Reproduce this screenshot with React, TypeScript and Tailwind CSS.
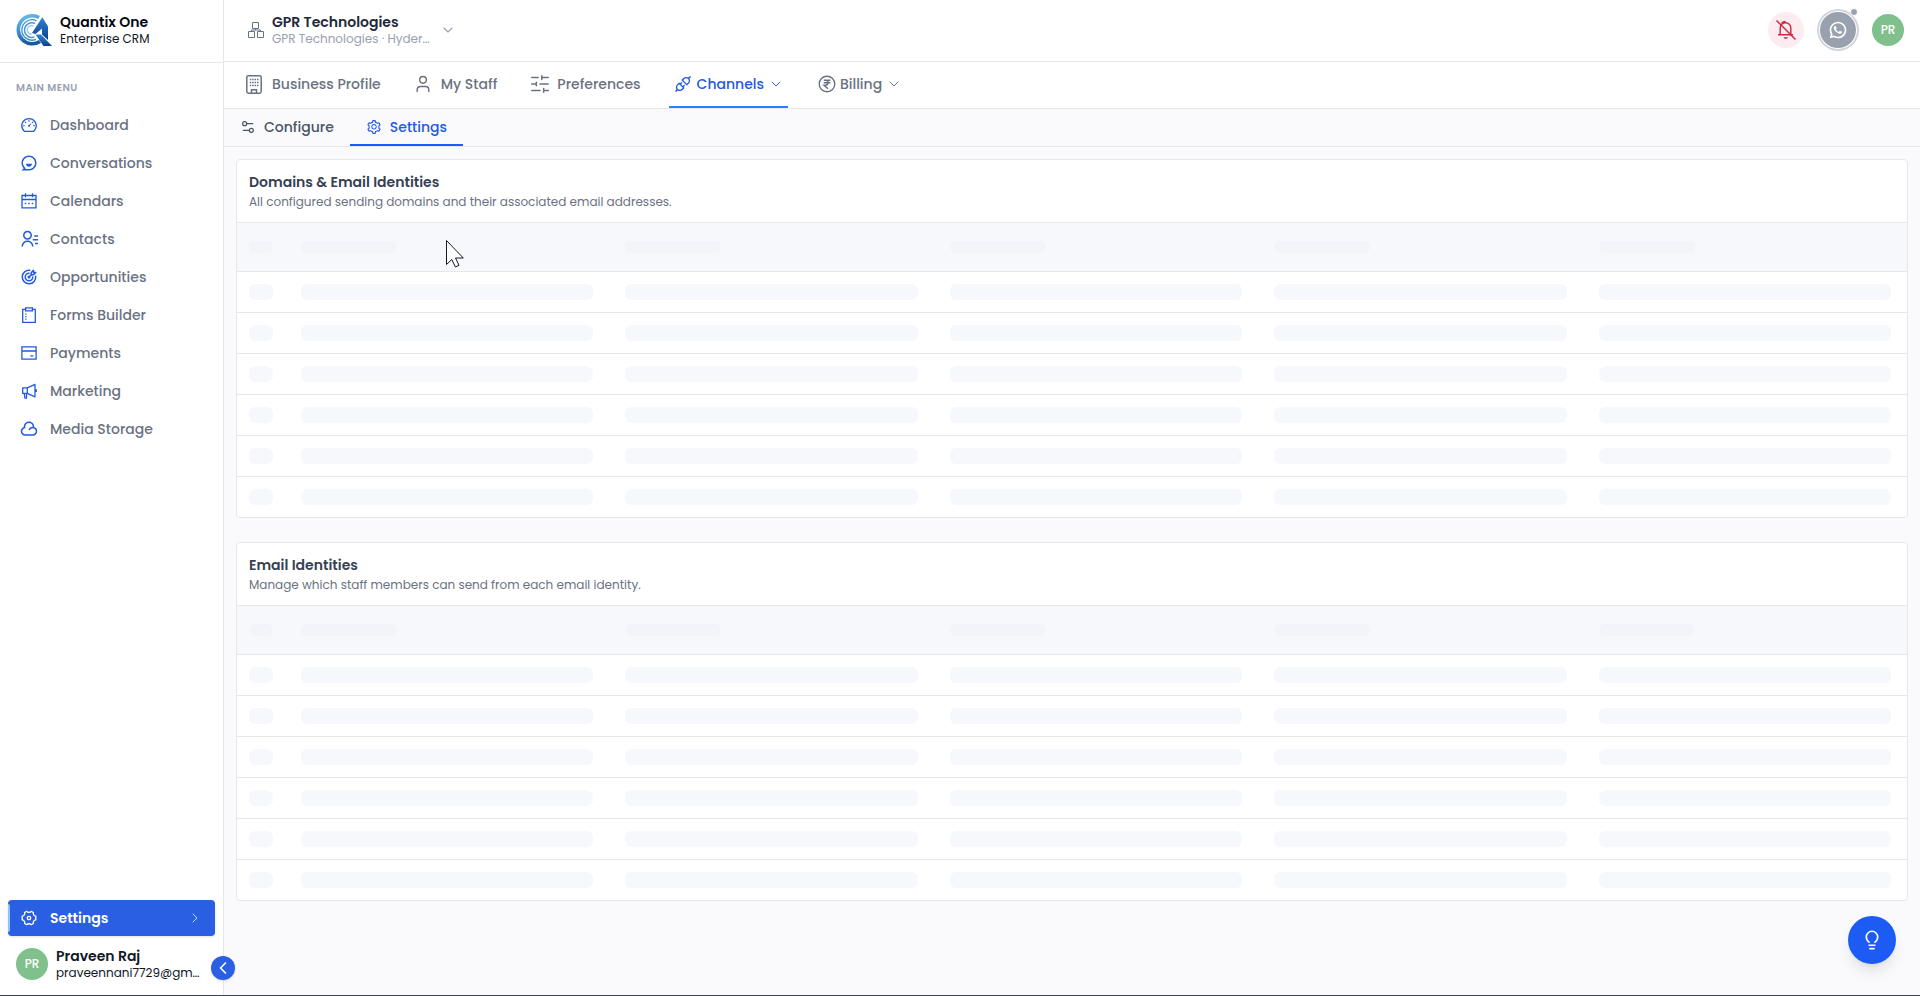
import React from "react";
import clsx from "clsx";
import { ChevronDown, ChevronLeft, ChevronRight, Settings2, SlidersHorizontal, User } from "lucide-react";
import { AiOutlineApi, AiOutlineDashboard, AiOutlineSetting } from "react-icons/ai";
import { RiChatSmile3Line, RiCloudLine, RiContactsLine, RiWhatsappLine } from "react-icons/ri";
import { TbTargetArrow } from "react-icons/tb";

type IconProps = { className?: string };

const CalendarIcon = ({ className }: IconProps) => (
  <svg viewBox="-1 -1 18 18" className={className} fill="none" stroke="currentColor" strokeWidth="1.3">
    <path d="M1 2.500h14v12.300H1zM1 6.500h14M4.500.3v4M11.500.3v4" />
    <path d="M3.800 10.500h1.500M7.250 10.500h1.500M10.700 10.500h1.500" />
  </svg>
);

const ClipboardIcon = ({ className }: IconProps) => (
  <svg viewBox="-1 -1 18 18" className={className} fill="none" stroke="currentColor" strokeWidth="1.3">
    <path d="M4.600 2.400H1.700v12.900h12.600V2.400h-2.900" />
    <path d="M4.600.9h6.800v3H4.600z" />
    <path d="M4.900 6.400v6.400" strokeDasharray="1.300 1.200" />
  </svg>
);

const PaymentIcon = ({ className }: IconProps) => (
  <svg viewBox="-1 -1 18 18" className={className} fill="none" stroke="currentColor" strokeWidth="1.3">
    <path d="M.9 1.800h14.200v12.400H.9zM.9 6h14.200M9.300 10.800h3" />
  </svg>
);

const MegaphoneIcon = ({ className }: IconProps) => (
  <svg viewBox="-1 -1 18 18" className={className} fill="none" stroke="currentColor" strokeWidth="1.3" strokeLinejoin="round">
    <path d="M1.700 4.800h4.600v5.600H1.700zM6.300 4.800 14 1.400v12.400l-7.700-3.400M15.200 6.200v2.800" />
    <path d="M3.200 10.400 4 15.200h1.500v-4.800" />
  </svg>
);

const GearIcon = ({ className }: IconProps) => (
  <svg viewBox="-1 -1 18 18" className={className} fill="none" stroke="currentColor" strokeWidth="1.3" strokeLinejoin="round">
    <path d="M5.700 1.300c1 1.300 3.600 1.300 4.600 0l2.100 1.200c-.6 1.600.6 3.400 2.400 3.700v3.600c-1.800.3-3 2.100-2.400 3.700l-2.100 1.200c-1-1.300-3.600-1.300-4.600 0l-2.100-1.200c.6-1.600-.6-3.400-2.400-3.700V6.200c1.800-.3 3-2.100 2.400-3.700z" />
    <circle cx="8" cy="8" r="1.700" />
  </svg>
);

const OrgIcon = ({ className }: IconProps) => (
  <svg viewBox="0 0 16 16" className={className} fill="none" stroke="currentColor" strokeWidth="1">
    <path d="M4.500.5h6v6h-6zM.5 9.500h6v6h-6zM9.500 9.500h6v6h-6zM7.500 6.500V8M3.500 9.500V8h9v1.500" />
  </svg>
);

const BuildingIcon = ({ className }: IconProps) => (
  <svg viewBox="0 0 16 19" className={className} fill="none" stroke="currentColor" strokeWidth="1.500">
    <rect x=".8" y=".8" width="14.400" height="17.400" rx="1.600" />
    <path d="M5.500 18v-3.200h5V18" />
    <path d="M3.800 4.500h8.700M3.800 7.500h8.700M3.800 10.500h8.700" strokeDasharray="1.500 .9" />
  </svg>
);

const RupeeIcon = ({ className }: IconProps) => (
  <svg viewBox="0 0 18 18" className={className} fill="none" stroke="currentColor" strokeWidth="1.400">
    <circle cx="9" cy="9" r="7.800" />
    <path d="M5.800 5.300h6.600M5.800 7.700h6.600M6 5.300h1.600c3.200 0 3.200 4.800 0 4.800H6l4 3.600" />
  </svg>
);

const BellOffIcon = ({ className }: IconProps) => (
  <svg viewBox="0 0 20 20" className={className} fill="none" stroke="currentColor" strokeWidth="1.400">
    <path d="M2 14.800h15M4.200 14.800V8a5.300 5.300 0 0 1 10.600 0v6.800M5.500 3.500C6.500 2.200 8 1.500 9.500 1.500" />
    <path d="M7.800 17.200h4a2 1.800 0 0 1-4 0z" fill="currentColor" stroke="none" />
    <path d="M.5.500l19 19" />
  </svg>
);

const BulbIcon = ({ className }: IconProps) => (
  <svg viewBox="0 0 14 20" className={className} fill="none" stroke="currentColor" strokeWidth="1.600">
    <path d="M4.600 12.600C2.500 11.200 1.300 9.200 1.300 7a5.700 5.700 0 0 1 11.400 0c0 2.200-1.200 4.200-3.300 5.600" />
    <path d="M3.500 15.300h7M4.300 18.600h5.400" />
  </svg>
);

const Logo = ({ className }: IconProps) => (
  <svg viewBox="0 0 36 32" className={className} fill="none">
    <defs>
      <linearGradient id="ring" x1="0" y1="0" x2=".3" y2="1">
        <stop offset="0" stopColor="#6cc3f2" />
        <stop offset="1" stopColor="#175aa8" />
      </linearGradient>
      <linearGradient id="tail" x1="0" y1="0" x2="0" y2="1">
        <stop offset="0" stopColor="#2f86d2" />
        <stop offset="1" stopColor="#0b3f8c" />
      </linearGradient>
    </defs>
    <path d="M23 3.500A14 14 0 1 0 24 27.500" stroke="url(#ring)" strokeWidth="3.600" />
    <path d="M20.500 6.800A10.200 10.200 0 1 0 20 25.400" stroke="#3b8fd0" strokeWidth="1.300" />
    <path d="M19 9.500A7.300 7.300 0 1 0 18.500 22.900" stroke="#4b98d6" strokeWidth="1.500" />
    <path d="M17.500 12.200A4.200 4.200 0 1 0 16 20" stroke="#8cc4ea" strokeWidth="1.200" />
    <path d="M26.300 3.300 32 12.500v13.500l-6-5.500v-6l-6.500 5.500-3.500-1z" fill="url(#tail)" />
    <path d="M19.500 20.500H25L36 32h-8.500z" fill="url(#tail)" />
  </svg>
);

const menuItems = [
  { label: "Dashboard", icon: AiOutlineDashboard },
  { label: "Conversations", icon: RiChatSmile3Line },
  { label: "Calendars", icon: CalendarIcon },
  { label: "Contacts", icon: RiContactsLine },
  { label: "Opportunities", icon: TbTargetArrow },
  { label: "Forms Builder", icon: ClipboardIcon },
  { label: "Payments", icon: PaymentIcon },
  { label: "Marketing", icon: MegaphoneIcon },
  { label: "Media Storage", icon: RiCloudLine },
];

const Sidebar = () => (
  <aside className="relative flex w-56 shrink-0 flex-col border-r border-gray-200 bg-white">
    <div className="flex h-[63px] items-center gap-2 border-b border-gray-200 px-4 pb-0.5">
      <Logo className="h-8 w-9" />
      <div>
        <p className="text-sm leading-[18px] font-semibold text-gray-950">Quantix One</p>
        <p className="text-xs leading-4 text-gray-900">Enterprise CRM</p>
      </div>
    </div>

    <nav className="px-2 pt-[17px]">
      <h2 className="px-2 text-[10px] leading-4 font-semibold tracking-wider text-gray-400">MAIN MENU</h2>
      <ul className="mt-[11px] space-y-0.5">
        {menuItems.map(({ label, icon: Icon }) => (
          <li key={label}>
            <a href="#" className="flex h-9 items-center gap-3 px-3 text-sm font-medium text-gray-500">
              <Icon className="size-[18px] text-[#2159e0]" />
              {label}
            </a>
          </li>
        ))}
      </ul>
    </nav>

    <div className="mt-auto px-2 pb-3.5">
      <a
        href="#"
        className="relative flex h-9 items-center gap-3 rounded bg-[#2a5fe3] px-3 text-sm font-semibold text-white shadow-sm"
      >
        <span className="absolute inset-y-1 left-0 w-0.5 rounded-r bg-blue-300" />
        <GearIcon className="size-[18px]" />
        Settings
        <ChevronRight className="ml-auto size-4 text-blue-200" strokeWidth={1.5} />
      </a>
      <div className="mt-[11px] flex items-center gap-2 px-2">
        <span className="flex size-8 shrink-0 items-center justify-center rounded-full bg-[#7fc08d] text-xs font-medium text-white">
          PR
        </span>
        <div>
          <p className="text-sm leading-[18px] font-semibold text-gray-900">Praveen Raj</p>
          <p className="text-xs leading-4 whitespace-nowrap text-gray-900">praveennani7729@gm…</p>
        </div>
      </div>
    </div>

    <button
      type="button"
      aria-label="Collapse sidebar"
      className="absolute -right-3 bottom-[15px] z-10 flex size-6 items-center justify-center rounded-full bg-[#2a5fe3] text-white shadow"
    >
      <ChevronLeft className="size-5" strokeWidth={2} />
    </button>
  </aside>
);

const TopBar = () => (
  <header className="flex h-[62px] items-center border-b border-gray-200 bg-white pr-4 pb-0.5 pl-6">
    <button type="button" className="flex items-center gap-2 text-left">
      <OrgIcon className="size-4 text-gray-500" />
      <span className="block w-40">
        <span className="block text-sm leading-[18px] font-semibold text-gray-800">GPR Technologies</span>
        <span className="block text-xs leading-4 whitespace-nowrap text-gray-400">GPR Technologies · Hyder…</span>
      </span>
      <ChevronDown className="size-4 text-gray-400" strokeWidth={1.7} />
    </button>

    <div className="ml-auto flex items-center gap-4">
      <button
        type="button"
        aria-label="Notifications off"
        className="flex size-9 items-center justify-center rounded-full bg-[#fdecef] text-[#cf2340]"
      >
        <BellOffIcon className="size-5" />
      </button>
      <button
        type="button"
        aria-label="WhatsApp"
        className="relative flex size-9 items-center justify-center rounded-full bg-gray-400 text-white ring-2 ring-gray-300 ring-offset-1"
      >
        <RiWhatsappLine className="size-5" />
        <span className="absolute -top-1 -right-0.5 size-2 rounded-full border border-white bg-gray-400" />
      </button>
      <span className="flex size-8 items-center justify-center rounded-full bg-[#7fc08d] text-xs font-medium text-white">
        PR
      </span>
    </div>
  </header>
);

const NavTabs = () => (
  <nav className="flex h-[47px] items-stretch border-b border-gray-200 bg-white pl-[22px] text-sm font-medium text-gray-500">
    <a href="#" className="flex items-center gap-2.5 pb-0.5">
      <BuildingIcon className="h-[19px] w-4" />
      Business Profile
    </a>
    <a href="#" className="ml-8 flex items-center gap-2 pb-0.5">
      <User className="size-5" strokeWidth={1.7} />
      My Staff
    </a>
    <a href="#" className="ml-8 flex items-center gap-1.5 pb-0.5">
      <SlidersHorizontal className="size-[22px]" strokeWidth={1.6} />
      Preferences
    </a>
    <a href="#" className="ml-7 flex items-center gap-1 border-b-2 border-blue-500 px-1 text-[#2159e0]">
      <AiOutlineApi className="size-5" />
      Channels
      <ChevronDown className="size-4" strokeWidth={1.4} />
    </a>
    <a href="#" className="ml-[30px] flex items-center gap-1 pb-0.5">
      <RupeeIcon className="size-[18px]" />
      Billing
      <ChevronDown className="size-4" strokeWidth={1.4} />
    </a>
  </nav>
);

const SubTabs = () => (
  <nav className="flex h-[38px] items-stretch border-b border-gray-200 pl-4 text-sm font-medium">
    <a href="#" className="flex items-center gap-2 pb-0.5 text-gray-600">
      <Settings2 className="size-4" strokeWidth={1.8} />
      Configure
    </a>
    <a href="#" className="ml-4 flex items-center gap-2 border-b-2 border-blue-600 px-4 text-[#2159e0]">
      <AiOutlineSetting className="size-4" />
      Settings
    </a>
  </nav>
);

interface SkeletonCardProps {
  title: string;
  description: string;
}

const columns = [1, 2, 3, 4, 5];
const rows = [1, 2, 3, 4, 5, 6];

const SkeletonCard: React.FC<SkeletonCardProps> = ({ title, description }) => (
  <section className="overflow-hidden rounded border border-gray-200 bg-white">
    <div className="px-3 pt-3 pb-[11px]">
      <h3 className="text-sm leading-5 font-semibold text-gray-700">{title}</h3>
      <p className="mt-px text-xs leading-[18px] text-gray-500">{description}</p>
    </div>
    <table className="w-full table-fixed border-separate border-spacing-0" aria-busy="true">
      <thead className="bg-[#f6f8fc]">
        <tr>
          <th className="w-12 border-y border-gray-200 px-3 py-[18px]">
            <div className="h-3 rounded-md bg-[#f2f4f9]" />
          </th>
          {columns.map((col) => (
            <th key={col} className="border-y border-gray-200 px-4 py-[18px]">
              <div className="h-3 w-24 rounded-md bg-[#f2f4f9]" />
            </th>
          ))}
        </tr>
      </thead>
      <tbody>
        {rows.map((row) => (
          <tr key={row} className="group">
            <td className="border-b border-gray-200 p-3 group-last:border-b-0">
              <div className="h-4 rounded-md bg-[#f6f8fc]" />
            </td>
            {columns.map((col) => (
              <td key={col} className="border-b border-gray-200 px-4 py-3 group-last:border-b-0">
                <div className="h-4 rounded-md bg-[#f6f8fc]" />
              </td>
            ))}
          </tr>
        ))}
      </tbody>
    </table>
  </section>
);

const App: React.FC = () => (
  <div
    className={clsx(
      "flex min-h-screen border-b border-gray-700 bg-[#fafafc]",
      "font-[Poppins,Inter,'Noto_Sans',sans-serif]"
    )}
  >
    <Sidebar />
    <div className="flex min-w-0 flex-1 flex-col">
      <TopBar />
      <NavTabs />
      <SubTabs />
      <main className="flex flex-col gap-6 p-3">
        <SkeletonCard
          title="Domains & Email Identities"
          description="All configured sending domains and their associated email addresses."
        />
        <SkeletonCard
          title="Email Identities"
          description="Manage which staff members can send from each email identity."
        />
      </main>
    </div>

    <button
      type="button"
      aria-label="Tips"
      className="fixed right-6 bottom-8 flex size-12 items-center justify-center rounded-full bg-[#1d5bf5] text-white shadow-lg"
    >
      <BulbIcon className="h-5 w-3.5" />
    </button>

    {/* mouse pointer */}
    <svg viewBox="0 0 19 28" className="pointer-events-none absolute top-60 left-[446px] h-7 w-[19px]">
      <path d="M.5.5v24l5.300-5 3.600 7.500 3.600-1.700-3.500-7.300h7.800z" fill="#fff" stroke="#111827" />
    </svg>
  </div>
);

export default App;
